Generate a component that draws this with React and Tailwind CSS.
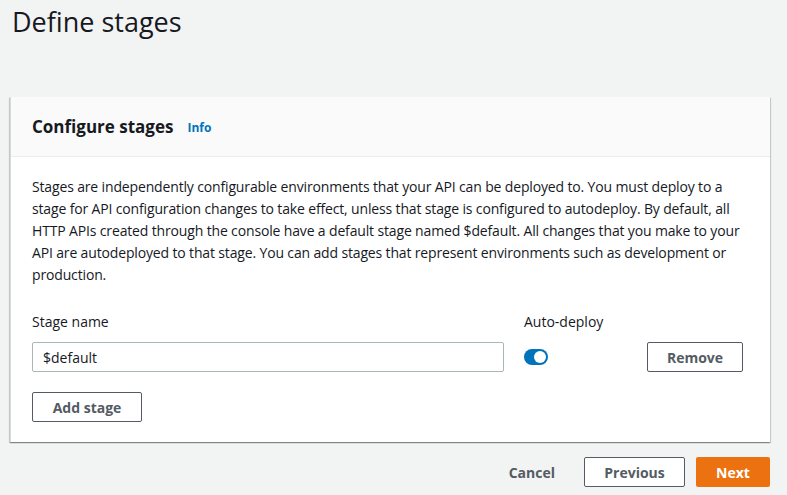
import React, { useState } from 'react';

const font = { fontFamily: '"Open Sans", "Noto Sans", Arial, sans-serif' };

const App = () => {
  const [auto, setAuto] = useState(true);

  return (
    <div className="w-[787px] h-[495px] bg-[#f2f3f3] text-[#16191f] overflow-hidden" style={font}>
      <h1 className="pl-[12px] pt-[4px] text-[27px] leading-[36px] font-normal">Define stages</h1>

      <div className="mt-[57px] ml-[10px] w-[760px] bg-white border-l border-[#d5dbdb] shadow-[0_1px_1px_0_rgba(0,28,36,0.3),1px_1px_1px_0_rgba(0,28,36,0.15),-1px_1px_1px_0_rgba(0,28,36,0.15)]">
        {/* header */}
        <div className="h-[60px] bg-[#fafafa] border-b border-[#eaeded] flex items-center px-[21px] gap-[14px]">
          <h2 className="text-[17px] font-bold leading-none">Configure stages</h2>
          <a className="text-[12px] font-bold text-[#0073bb] mt-[2px]">Info</a>
        </div>

        {/* body */}
        <div className="px-[21px] pt-[19px] pb-[20px]">
          <p className="text-[14px] leading-[22px] tracking-[-0.15px] whitespace-nowrap">
            Stages are independently configurable environments that your API can be deployed to. You must deploy to a<br />
            stage for API configuration changes to take effect, unless that stage is configured to autodeploy. By default, all<br />
            HTTP APIs created through the console have a default stage named $default. All changes that you make to your<br />
            API are autodeployed to that stage. You can add stages that represent environments such as development or<br />
            production.
          </p>

          <div className="mt-[25px] flex">
            <div className="w-[472px]">
              <div className="text-[14px] leading-[22px] mb-[9px]">Stage name</div>
              <input
                defaultValue="$default"
                className="w-[472px] h-[30px] border border-[#aab7b8] rounded-[2px] px-[10px] text-[14px] text-[#16191f] outline-none"
                style={font}
              />
            </div>
            <div className="ml-[20px] w-[123px]">
              <div className="text-[14px] leading-[22px] mb-[9px]">Auto-deploy</div>
              <div className="h-[30px] flex items-center">
                <button
                  onClick={() => setAuto(!auto)}
                  className={`w-[24px] h-[16px] rounded-full flex items-center px-[2px] ${auto ? 'bg-[#0073bb] justify-end' : 'bg-[#879596] justify-start'}`}
                >
                  <span className="w-[12px] h-[12px] rounded-full bg-white block" />
                </button>
              </div>
            </div>
            <div className="pt-[31px]">
              <button className="w-[96px] h-[30px] border border-[#545b64] rounded-[2px] bg-white text-[14px] font-bold text-[#545b64]">
                Remove
              </button>
            </div>
          </div>

          <button className="mt-[20px] w-[110px] h-[30px] border border-[#545b64] rounded-[2px] bg-white text-[14px] font-bold text-[#545b64]">
            Add stage
          </button>
        </div>
      </div>

      {/* footer */}
      <div className="w-[770px] flex justify-end items-center mt-[15px] gap-[11px]">
        <button className="px-[18px] h-[30px] text-[14px] font-bold text-[#545b64]">Cancel</button>
        <button className="w-[101px] h-[30px] border border-[#545b64] rounded-[2px] bg-white text-[14px] font-bold text-[#545b64]">
          Previous
        </button>
        <button className="w-[74px] h-[30px] rounded-[2px] bg-[#ec7211] text-[14px] font-bold text-white">Next</button>
      </div>
    </div>
  );
};

export default App;
